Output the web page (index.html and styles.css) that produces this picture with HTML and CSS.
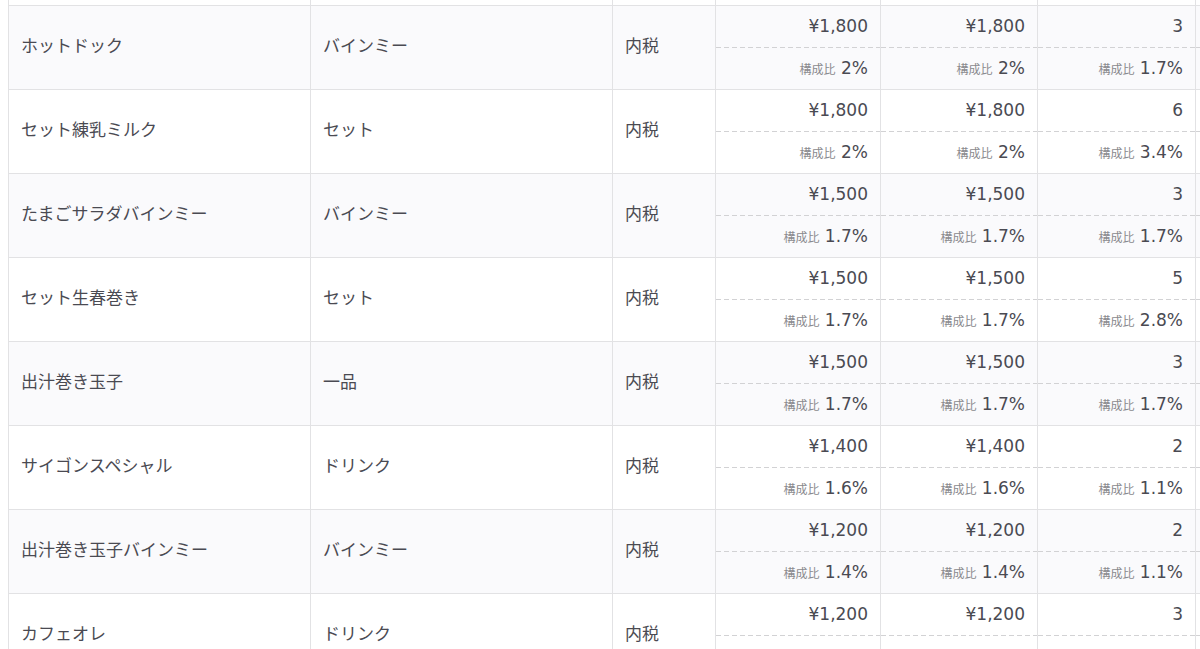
FILE: index.html
```html
<!DOCTYPE html>
<html lang="ja">
<head>
<meta charset="utf-8">
<title>商品別売上</title>
<link rel="stylesheet" href="styles.css">
</head>
<body>
<div class="wrap">
<table class="sales">
<colgroup>
<col class="c-name"><col class="c-cat"><col class="c-tax"><col class="c-num1"><col class="c-num2"><col class="c-num3"><col class="c-more">
</colgroup>
<tbody>
<tr class="stub">
<td></td><td></td><td></td><td></td><td></td><td></td><td></td>
</tr>
<tr class="alt">
<td class="txt">ホットドック</td><td class="txt">バインミー</td><td class="txt">内税</td>
<td class="num"><div class="v">¥1,800</div><div class="r"><span class="lbl">構成比</span> 2%</div></td>
<td class="num"><div class="v">¥1,800</div><div class="r"><span class="lbl">構成比</span> 2%</div></td>
<td class="num"><div class="v">3</div><div class="r"><span class="lbl">構成比</span> 1.7%</div></td>
<td class="num"><div class="v"></div><div class="r"></div></td>
</tr>
<tr>
<td class="txt">セット練乳ミルク</td><td class="txt">セット</td><td class="txt">内税</td>
<td class="num"><div class="v">¥1,800</div><div class="r"><span class="lbl">構成比</span> 2%</div></td>
<td class="num"><div class="v">¥1,800</div><div class="r"><span class="lbl">構成比</span> 2%</div></td>
<td class="num"><div class="v">6</div><div class="r"><span class="lbl">構成比</span> 3.4%</div></td>
<td class="num"><div class="v"></div><div class="r"></div></td>
</tr>
<tr class="alt">
<td class="txt">たまごサラダバインミー</td><td class="txt">バインミー</td><td class="txt">内税</td>
<td class="num"><div class="v">¥1,500</div><div class="r"><span class="lbl">構成比</span> 1.7%</div></td>
<td class="num"><div class="v">¥1,500</div><div class="r"><span class="lbl">構成比</span> 1.7%</div></td>
<td class="num"><div class="v">3</div><div class="r"><span class="lbl">構成比</span> 1.7%</div></td>
<td class="num"><div class="v"></div><div class="r"></div></td>
</tr>
<tr>
<td class="txt">セット生春巻き</td><td class="txt">セット</td><td class="txt">内税</td>
<td class="num"><div class="v">¥1,500</div><div class="r"><span class="lbl">構成比</span> 1.7%</div></td>
<td class="num"><div class="v">¥1,500</div><div class="r"><span class="lbl">構成比</span> 1.7%</div></td>
<td class="num"><div class="v">5</div><div class="r"><span class="lbl">構成比</span> 2.8%</div></td>
<td class="num"><div class="v"></div><div class="r"></div></td>
</tr>
<tr class="alt">
<td class="txt">出汁巻き玉子</td><td class="txt">一品</td><td class="txt">内税</td>
<td class="num"><div class="v">¥1,500</div><div class="r"><span class="lbl">構成比</span> 1.7%</div></td>
<td class="num"><div class="v">¥1,500</div><div class="r"><span class="lbl">構成比</span> 1.7%</div></td>
<td class="num"><div class="v">3</div><div class="r"><span class="lbl">構成比</span> 1.7%</div></td>
<td class="num"><div class="v"></div><div class="r"></div></td>
</tr>
<tr>
<td class="txt">サイゴンスペシャル</td><td class="txt">ドリンク</td><td class="txt">内税</td>
<td class="num"><div class="v">¥1,400</div><div class="r"><span class="lbl">構成比</span> 1.6%</div></td>
<td class="num"><div class="v">¥1,400</div><div class="r"><span class="lbl">構成比</span> 1.6%</div></td>
<td class="num"><div class="v">2</div><div class="r"><span class="lbl">構成比</span> 1.1%</div></td>
<td class="num"><div class="v"></div><div class="r"></div></td>
</tr>
<tr class="alt">
<td class="txt">出汁巻き玉子バインミー</td><td class="txt">バインミー</td><td class="txt">内税</td>
<td class="num"><div class="v">¥1,200</div><div class="r"><span class="lbl">構成比</span> 1.4%</div></td>
<td class="num"><div class="v">¥1,200</div><div class="r"><span class="lbl">構成比</span> 1.4%</div></td>
<td class="num"><div class="v">2</div><div class="r"><span class="lbl">構成比</span> 1.1%</div></td>
<td class="num"><div class="v"></div><div class="r"></div></td>
</tr>
<tr>
<td class="txt">カフェオレ</td><td class="txt">ドリンク</td><td class="txt">内税</td>
<td class="num"><div class="v">¥1,200</div><div class="r"><span class="lbl">構成比</span> 1.4%</div></td>
<td class="num"><div class="v">¥1,200</div><div class="r"><span class="lbl">構成比</span> 1.4%</div></td>
<td class="num"><div class="v">3</div><div class="r"><span class="lbl">構成比</span> 1.7%</div></td>
<td class="num"><div class="v"></div><div class="r"></div></td>
</tr>
</tbody>
</table>
</div>
</body>
</html>
```
FILE: styles.css
```css
html, body {
  margin: 0;
  padding: 0;
  background: #ffffff;
  overflow: hidden;
}
.wrap {
  height: 649px;
  overflow: hidden;
  padding-left: 8px;
}
.sales {
  border-collapse: collapse;
  table-layout: fixed;
  width: 1300px;
  font-family: "Noto Sans CJK JP", "Noto Sans", sans-serif;
  font-size: 17px;
  color: #4a4a52;
}
.c-name { width: 302px; }
.c-cat { width: 302px; }
.c-tax { width: 103px; }
.c-num1 { width: 165px; }
.c-num2 { width: 157px; }
.c-num3 { width: 158px; }
.c-more { width: 113px; }
.sales td {
  border: 1px solid #e2e2e4;
  height: 83px;
  padding: 0;
  vertical-align: middle;
}
.sales tr.stub td {
  height: 5px;
  border-top: none;
}
.sales tr.alt td {
  background: #fafafc;
}
.txt {
  white-space: nowrap;
}
.sales td.txt {
  padding: 0 12px 6px 12px;
  height: 77px;
}
.num .v,
.num .r {
  height: 41px;
  line-height: 40px;
  text-align: right;
  padding: 0 12px;
  white-space: nowrap;
  font-family: "DejaVu Sans", "Noto Sans CJK JP", sans-serif;
  font-size: 17px;
}
.num .r {
  height: 41px;
  padding-top: 1px;
  background: repeating-linear-gradient(to right, #d2d2d4 0 5px, transparent 5px 8px) top left / 100% 1px no-repeat;
}
.lbl {
  font-family: "Noto Sans CJK JP", sans-serif;
  font-size: 12px;
  color: #8a8a8e;
}
```
